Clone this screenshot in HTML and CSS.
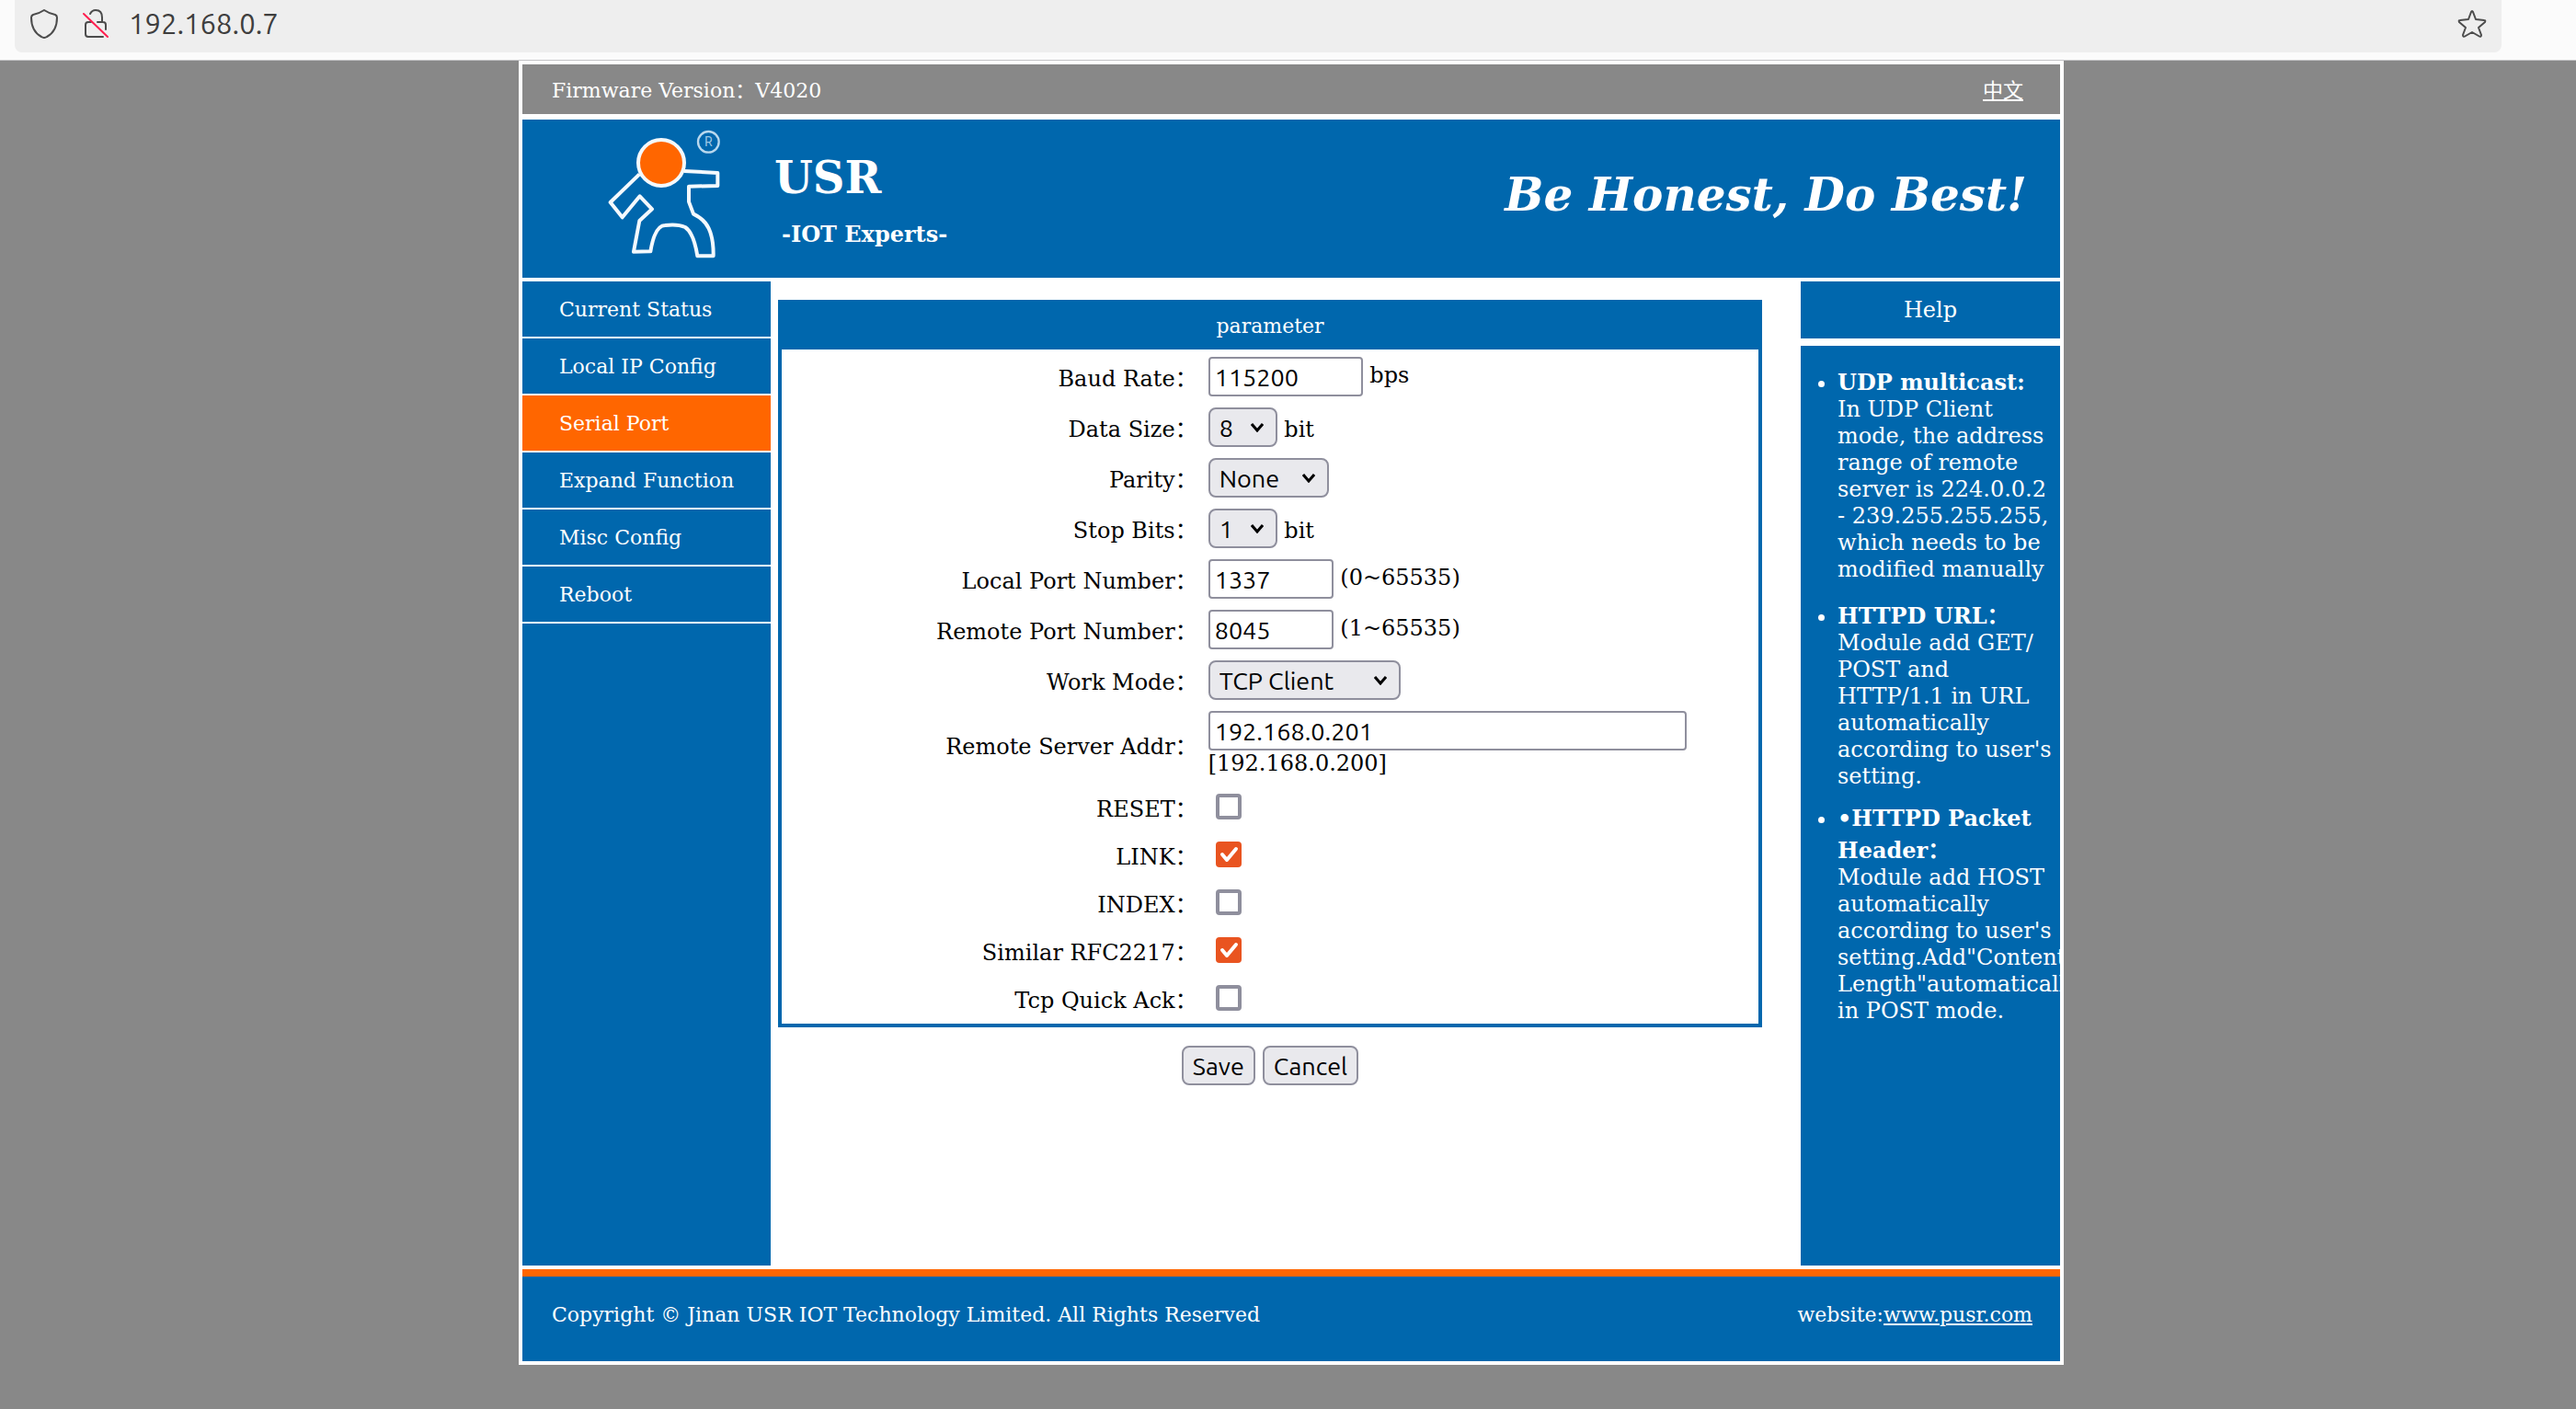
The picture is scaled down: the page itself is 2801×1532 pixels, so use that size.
FILE: index.html
```html
<!DOCTYPE html>
<html lang="en">
<head>
<meta charset="utf-8">
<title>USR IOT</title>
<link rel="stylesheet" href="styles.css">
</head>
<body>
<div class="toolbar">
  <div class="urlbar">
    <svg class="icon" viewBox="0 0 32 32" aria-hidden="true"><path d="M16 1 Q22 5 28 6 Q30 7 30 9 Q30 24 19 30 Q16 32 13 30 Q2 24 2 9 Q2 7 4 6 Q10 5 16 1 Z"/></svg>
    <svg class="icon" viewBox="0 0 32 32" aria-hidden="true"><path d="M12 5 Q14 1 18 1 Q25 1 25 9 V14 M20 14 H26 Q29 14 29 17 V22 M13 14 H10 Q7 14 7 17 V27 Q7 30 10 30 H26"/><path class="slash" d="M5 5 L31 30"/></svg>
    <input class="url" type="text" value="192.168.0.7" aria-label="Address">
    <svg class="icon" viewBox="0 0 32 32" aria-hidden="true"><path d="M15 3 Q16 1 17 3 L20 11 L29 12 Q31 12 30 14 L23 20 L26 28 Q26 31 23 29 L16 25 L9 29 Q6 31 6 28 L9 20 L2 14 Q1 12 3 12 L12 11 Z"/></svg>
  </div>
</div>
<div class="page">
  <div class="frame">
    <div class="topbar"><span>Firmware Version：V4020</span><a href="#zh" lang="zh">中文</a></div>
    <header class="banner">
      <svg class="logo" viewBox="111 30 390 516" role="img" aria-label="USR logo">
        <path d="M226 208 L131 300 L170 349 L227 280 L267 322 L226 360 L207 461 L262 460 Q276 375 310 375 Q350 370 375 381 Q403 400 415 475 L467 475 Q468 420 452 385 Q438 355 402 338 L387 298 V248 L481 246 V204 L372 198"/>
        <circle class="head" cx="297" cy="171" r="75"/>
        <circle class="mark" cx="451" cy="103" r="34"/>
        <text class="mark-text" x="451" y="118" text-anchor="middle">R</text>
      </svg>
      <div class="brand"><h1>USR</h1><p>-IOT Experts-</p></div>
      <p class="slogan">Be Honest, Do Best!</p>
    </header>
    <div class="columns">
      <nav class="menu">
        <a href="#status">Current Status</a>
        <a href="#ip">Local IP Config</a>
        <a class="active" href="#serial">Serial Port</a>
        <a href="#expand">Expand Function</a>
        <a href="#misc">Misc Config</a>
        <a href="#reboot">Reboot</a>
      </nav>
      <main class="main">
        <form>
          <section class="panel">
            <h2>parameter</h2>
            <div class="rows">
              <div class="row"><label for="baud">Baud Rate：</label><div class="field"><input class="text w-baud" id="baud" type="text" value="115200"> bps</div></div>
              <div class="row"><label for="data">Data Size：</label><div class="field"><select class="w-digit" id="data"><option>8</option></select> bit</div></div>
              <div class="row"><label for="parity">Parity：</label><div class="field"><select class="w-parity" id="parity"><option>None</option></select></div></div>
              <div class="row"><label for="stop">Stop Bits：</label><div class="field"><select class="w-digit" id="stop"><option>1</option></select> bit</div></div>
              <div class="row"><label for="lport">Local Port Number：</label><div class="field"><input class="text w-port" id="lport" type="text" value="1337"> (0~65535)</div></div>
              <div class="row"><label for="rport">Remote Port Number：</label><div class="field"><input class="text w-port" id="rport" type="text" value="8045"> (1~65535)</div></div>
              <div class="row"><label for="mode">Work Mode：</label><div class="field"><select class="w-mode" id="mode"><option>TCP Client</option></select></div></div>
              <div class="row"><label for="addr">Remote Server Addr：</label><div class="field"><input class="text w-addr" id="addr" type="text" value="192.168.0.201"><br>[192.168.0.200]</div></div>
              <div class="row"><label for="reset">RESET：</label><div class="field"><input class="check" id="reset" type="checkbox"></div></div>
              <div class="row"><label for="link">LINK：</label><div class="field"><input class="check" id="link" type="checkbox" checked></div></div>
              <div class="row"><label for="index">INDEX：</label><div class="field"><input class="check" id="index" type="checkbox"></div></div>
              <div class="row"><label for="rfc">Similar RFC2217：</label><div class="field"><input class="check" id="rfc" type="checkbox" checked></div></div>
              <div class="row"><label for="ack">Tcp Quick Ack：</label><div class="field"><input class="check" id="ack" type="checkbox"></div></div>
            </div>
          </section>
          <div class="actions"><button type="submit">Save</button><button type="reset">Cancel</button></div>
        </form>
      </main>
      <aside class="help">
        <h2>Help</h2>
        <div class="help-body">
          <ul>
            <li><b>UDP multicast:</b><br>In UDP Client mode, the address range of remote server is 224.0.0.2 - 239.255.255.255, which needs to be modified manually</li>
            <li><b>HTTPD URL：</b><br>Module add GET/<wbr>POST and HTTP/1.1 in URL automatically according to user's setting.</li>
            <li><b>•HTTPD Packet Header：</b><br>Module add HOST automatically according to user's setting.Add"Content-Length"automatically in POST mode.</li>
          </ul>
        </div>
      </aside>
    </div>
    <footer class="footer"><span>Copyright © Jinan USR IOT Technology Limited. All Rights Reserved</span><span>website:<a href="#pusr">www.pusr.com</a></span></footer>
  </div>
</div>
</body>
</html>
```
FILE: styles.css
```css
:root {
  --blue: #0067ad;
  --orange: #ff6600;
  --gray: #888888;
  --line: #8f8f9d;
  --ui: "Ubuntu", "Noto Sans", sans-serif;
}
* { box-sizing: border-box; }
body {
  margin: 0;
  background: var(--gray);
  color: #000;
  font: 24px "DejaVu Serif", "Noto Sans CJK SC", serif;
}
h1, h2, p { margin: 0; }
a { color: inherit; }

.toolbar {
  padding: 0 81px 8px 16px;
  background: #fbfbfb;
  border-bottom: 1px solid #c4c4c6;
}
.urlbar {
  display: flex;
  align-items: center;
  gap: 22px;
  height: 57px;
  padding: 0 16px 6px;
  background: #eeeeee;
  border-radius: 0 0 8px 8px;
}
.icon {
  flex: none;
  width: 32px;
  height: 32px;
  fill: none;
  stroke: #4c4c4c;
  stroke-width: 2;
  stroke-linejoin: round;
  stroke-linecap: round;
}
.icon .slash { stroke: #ff1f4f; }
.url {
  flex: 1;
  min-width: 0;
  padding: 0;
  border: 0;
  background: none;
  color: #3e3e3e;
  font: 31px/40px var(--ui);
}

.page { padding-left: 7px; }
.frame {
  max-width: 1680px;
  margin: 0 auto;
  padding: 4px;
  background: #fff;
}
.topbar {
  display: flex;
  justify-content: space-between;
  align-items: center;
  height: 54px;
  padding: 0 40px 2px 32px;
  background: var(--gray);
  color: #fff;
  font-size: 22px;
}
.banner {
  display: flex;
  align-items: flex-start;
  margin-top: 6px;
  padding: 0 36px 0 89px;
  background: var(--blue);
  color: #fff;
}
.logo {
  flex: none;
  display: block;
  width: 130px;
  height: 172px;
  fill: none;
  stroke: #f4f9fd;
  stroke-width: 12;
  stroke-linejoin: round;
}
.logo .head { fill: var(--orange); }
.logo .mark { stroke: #b8d8ee; stroke-width: 7; }
.logo .mark-text { fill: #9cc6e4; stroke: none; font: 42px Roboto, sans-serif; }
.brand { padding: 35px 0 0 55px; font-weight: bold; }
.brand h1 { font-size: 48px; }
.brand p { margin-top: 19px; padding-left: 8px; }
.slogan {
  margin: 52px 0 0 auto;
  font-size: 50px;
  font-weight: bold;
  font-style: italic;
}

.columns {
  display: grid;
  grid-template-columns: 270px 1fr 282px;
  min-height: 1070px;
  margin: 4px 0;
}
.menu { background: var(--blue); color: #fff; font-size: 22px; }
.menu a {
  display: block;
  padding: 2px 0 0 40px;
  border-bottom: 2px solid #fff;
  line-height: 58px;
  text-decoration: none;
}
.menu .active { background: var(--orange); }
.main { padding: 20px 42px 0 8px; }
.panel { border: 4px solid var(--blue); }
.panel h2 {
  background: var(--blue);
  color: #fff;
  font-size: 22px;
  font-weight: normal;
  line-height: 50px;
  text-align: center;
}
.rows { padding: 2px 0; }
.row {
  display: grid;
  grid-template-columns: 43% 1fr;
  align-items: center;
}
.row label { padding-right: 5px; text-align: right; }
.field { padding: 6px 0 6px 7px; line-height: 29px; }
.text, select, button {
  height: 43px;
  border: 2px solid var(--line);
  color: #000;
  font: 27px var(--ui);
}
.text {
  padding: 0 5px;
  border-radius: 4px;
  background: #fff;
  vertical-align: middle;
}
select {
  appearance: none;
  padding: 0 8px 0 10px;
  border-radius: 8px;
  background: #e9e9ed url("data:image/svg+xml,%3Csvg xmlns='http://www.w3.org/2000/svg' width='14' height='10'%3E%3Cpath d='M1 1l6 7 6-7' fill='none' stroke='black' stroke-width='3'/%3E%3C/svg%3E") no-repeat right 13px center;
}
.w-baud { width: 168px; }
.w-port { width: 136px; }
.w-addr { width: 520px; max-width: 100%; }
.w-digit { width: 75px; }
.w-parity { width: 131px; }
.w-mode { width: 209px; }
.check {
  display: block;
  appearance: none;
  width: 28px;
  height: 28px;
  margin: 6px 8px;
  border: 4px solid var(--line);
  border-radius: 4px;
  background: #fff;
}
.check:checked {
  border: 0;
  background: #e95420 url("data:image/svg+xml,%3Csvg xmlns='http://www.w3.org/2000/svg' width='28' height='28'%3E%3Cpath d='M7 14l5 6L22 8' fill='none' stroke='white' stroke-width='4' stroke-linecap='round' stroke-linejoin='round'/%3E%3C/svg%3E");
}
.actions {
  display: flex;
  justify-content: center;
  gap: 8px;
  padding-top: 20px;
}
button {
  padding: 0 10px;
  border-radius: 8px;
  background: #e9e9ed;
}

.help {
  display: flex;
  flex-direction: column;
  gap: 8px;
  min-width: 0;
  color: #fff;
}
.help h2 {
  background: var(--blue);
  font-size: 24px;
  font-weight: normal;
  line-height: 62px;
  text-align: center;
}
.help-body { flex: 1; overflow: hidden; background: var(--blue); }
.help ul { margin: 25px 0; padding-left: 40px; }
.help li { margin-bottom: 16px; line-height: 29px; }
.help b { line-height: normal; }

.footer {
  display: flex;
  justify-content: space-between;
  align-items: center;
  height: 100px;
  padding: 0 30px 10px 32px;
  border-top: 8px solid var(--orange);
  background: var(--blue);
  color: #fff;
  font-size: 22px;
}
```
